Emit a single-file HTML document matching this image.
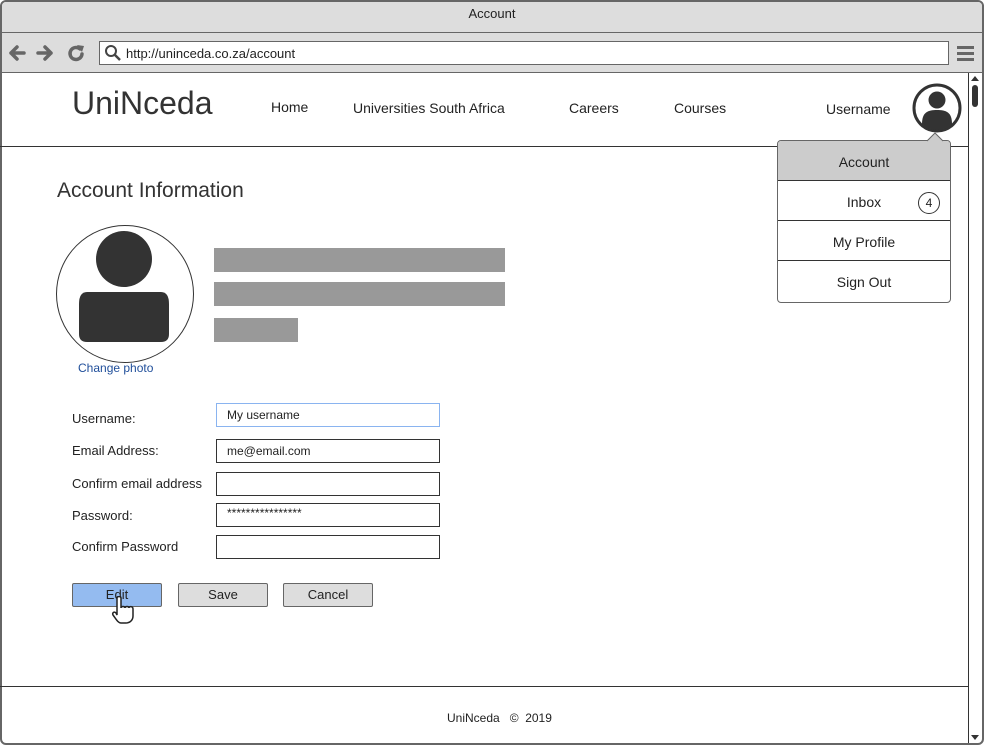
<!DOCTYPE html>
<html><head><style>
*{margin:0;padding:0;box-sizing:border-box}
body{width:984px;height:745px;position:relative;font-family:"Liberation Sans",sans-serif;color:#222;background:#fff;overflow:hidden}
.a{position:absolute}
.inp{position:absolute;left:216px;width:224px;height:24px;border:1px solid #333;font-size:12px;padding:4px 10px;line-height:14px}
.btn{position:absolute;top:583px;width:90px;height:24px;border:1px solid #666;background:#ddd;font-size:13px;text-align:center;line-height:22px;border-radius:2px}
.mi{position:absolute;left:0;width:172px;height:40px;border-top:1px solid #333;text-align:center;line-height:42px;font-size:14px}
.lb{position:absolute;left:72px;font-size:13px}
</style></head><body>
<div class="a" style="left:0;top:0;width:984px;height:745px;border:2px solid #666;border-radius:6px"></div>
<div class="a" style="left:2px;top:2px;width:980px;height:71px;background:#ddd;border-radius:4px 4px 0 0"></div>
<div class="a" style="left:0;top:6px;width:984px;text-align:center;font-size:13px">Account</div>
<div class="a" style="left:2px;top:32px;width:980px;height:1px;background:#666"></div>
<div class="a" style="left:2px;top:72px;width:980px;height:1px;background:#666"></div>
<svg class="a" style="left:8px;top:42px" width="80" height="22"><g stroke="#666" stroke-width="3.5" fill="none" stroke-linecap="round"><path d="M3 11h13M3 11l6-6M3 11l6 6"/><path d="M30 11h13M43 11l-6-6M43 11l-6 6"/><path d="M72 7a6 6 0 1 0 2 5"/></g><path d="M69 3l7 1-2 6z" fill="#666"/></svg>
<div class="a" style="left:99px;top:41px;width:850px;height:24px;background:#fff;border:1px solid #666"></div>
<svg class="a" style="left:104px;top:44px" width="18" height="18"><circle cx="7" cy="7" r="5" stroke="#444" stroke-width="2" fill="none"/><path d="M11 11l5 5" stroke="#444" stroke-width="2.5"/></svg>
<div class="a" style="left:126px;top:46px;font-size:13px">http://uninceda.co.za/account</div>
<svg class="a" style="left:956px;top:44px" width="20" height="18"><g fill="#666"><rect x="1" y="2" width="17" height="3"/><rect x="1" y="8" width="17" height="3"/><rect x="1" y="14" width="17" height="3"/></g></svg>
<div class="a" style="left:968px;top:73px;width:1px;height:670px;background:#333"></div>
<svg class="a" style="left:969px;top:73px" width="13" height="672"><path d="M2 8l4-5 4 5z" fill="#333"/><rect x="3" y="12" width="6" height="22" rx="3" fill="#333"/><path d="M2 662l4 5 4-5z" fill="#333"/></svg>
<div class="a" style="left:72px;top:85px;font-size:32px;color:#333">UniNceda</div>
<div class="a" style="left:271px;top:99px;font-size:14px">Home</div>
<div class="a" style="left:353px;top:100px;font-size:14px">Universities South Africa</div>
<div class="a" style="left:569px;top:100px;font-size:14px">Careers</div>
<div class="a" style="left:674px;top:100px;font-size:14px">Courses</div>
<div class="a" style="left:826px;top:101px;font-size:14px">Username</div>
<svg class="a" style="left:912px;top:82px" width="52" height="52"><circle cx="25" cy="26" r="23" fill="#fff" stroke="#333" stroke-width="3"/><circle cx="25" cy="18" r="8.5" fill="#333"/><path d="M10 42c0-12 6-14 15-14s15 2 15 14a22 22 0 0 1-30 0z" fill="#333"/></svg>
<div class="a" style="left:0;top:146px;width:968px;height:1px;background:#333"></div>
<div class="a" style="left:777px;top:140px;width:174px;height:163px;border:1px solid #666;border-radius:4px;background:#fff;overflow:hidden">
<div class="mi" style="top:0;border-top:none;background:#ccc;height:40px">Account</div>
<div class="mi" style="top:39px">Inbox</div>
<div class="mi" style="top:79px">My Profile</div>
<div class="mi" style="top:119px">Sign Out</div>
<div class="a" style="left:140px;top:51px;width:22px;height:22px;border:1px solid #333;border-radius:50%;font-size:12px;text-align:center;line-height:20px">4</div>
</div>
<svg class="a" style="left:926px;top:132px" width="18" height="10"><path d="M1 9L9 1l8 8" fill="#ccc" stroke="#666"/></svg>
<div class="a" style="left:57px;top:179px;font-size:21px;color:#333">Account Information</div>
<svg class="a" style="left:55px;top:224px" width="142" height="142"><circle cx="70" cy="70" r="68.5" fill="#fff" stroke="#333" stroke-width="1"/><circle cx="69" cy="35" r="28" fill="#333"/><path d="M32 68q-8 0-8 12v30q0 8 8 8h74q8 0 8-8v-30q0-12-8-12q-12 0-37 0q-25 0-37 0z" fill="#333"/></svg>
<div class="a" style="left:78px;top:361px;font-size:12px;color:#1f4e9a">Change photo</div>
<div class="a" style="left:214px;top:248px;width:291px;height:24px;background:#999"></div>
<div class="a" style="left:214px;top:282px;width:291px;height:24px;background:#999"></div>
<div class="a" style="left:214px;top:318px;width:84px;height:24px;background:#999"></div>
<div class="lb" style="top:411px">Username:</div>
<div class="lb" style="top:443px">Email Address:</div>
<div class="lb" style="top:476px">Confirm email address</div>
<div class="lb" style="top:508px">Password:</div>
<div class="lb" style="top:539px">Confirm Password</div>
<div class="inp" style="top:403px;border-color:#8ab4f0">My username</div>
<div class="inp" style="top:439px">me@email.com</div>
<div class="inp" style="top:472px"></div>
<div class="inp" style="top:503px;padding-top:2px">****************</div>
<div class="inp" style="top:535px"></div>
<div class="btn" style="left:72px;background:#94bbf0">Edit</div>
<div class="btn" style="left:178px">Save</div>
<div class="btn" style="left:283px">Cancel</div>
<svg class="a" style="left:111px;top:596px" width="26" height="28"><path d="M6 2c0-2 4-2 4 0v10c0-2 4-2 4 0c0-2 4-2 4 0c0-2 4-2 4 1v7c0 4-3 7-7 7h-5c-3 0-5-4-8-8c-1-2 1-4 3-2l1 2z" fill="#fff" stroke="#222" stroke-width="1.5"/></svg>
<div class="a" style="left:0;top:686px;width:968px;height:1px;background:#333"></div>
<div class="a" style="left:447px;top:711px;font-size:12px">UniNceda &nbsp;&nbsp;© &nbsp;2019</div>
</body></html>
